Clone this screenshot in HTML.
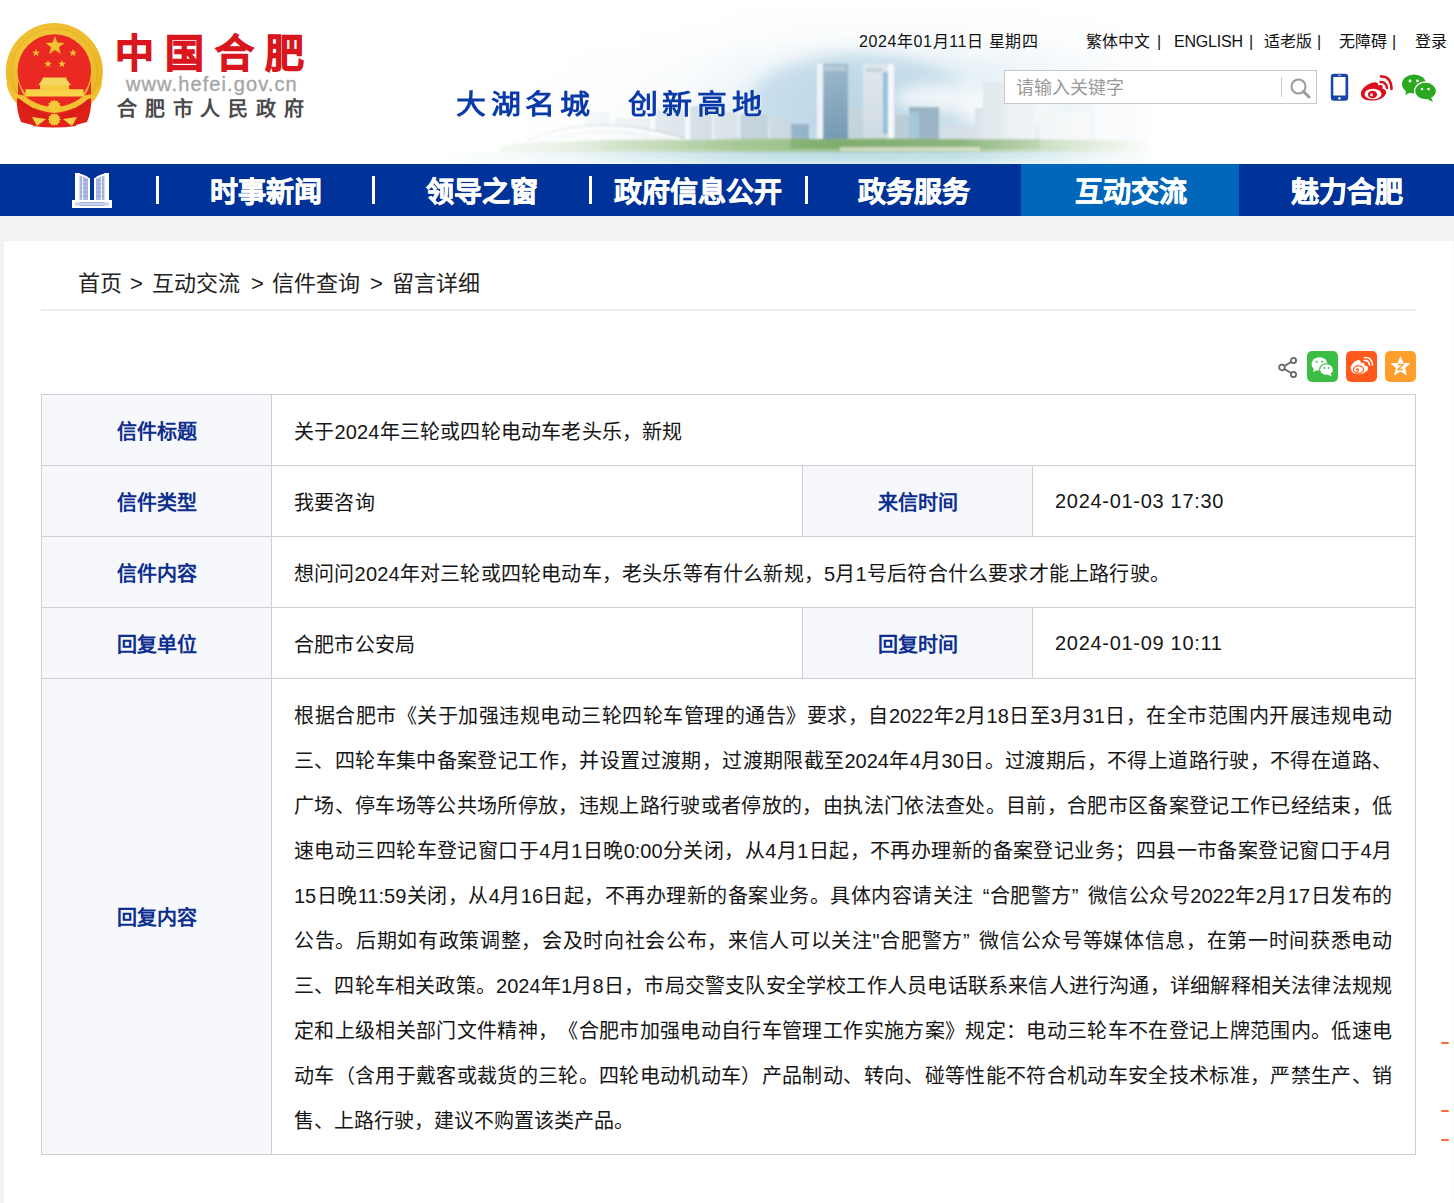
<!DOCTYPE html>
<html lang="zh-CN"><head><meta charset="utf-8">
<style>
*{margin:0;padding:0;box-sizing:border-box}
html,body{text-spacing-trim:space-all;width:1454px;height:1203px;overflow:hidden;background:#fff;font-family:"Liberation Sans",sans-serif;color:#333}
.abs{position:absolute}
#header{position:absolute;left:0;top:0;width:1454px;height:164px;background:#fff;overflow:hidden}
#nav{position:absolute;left:0;top:164px;width:1454px;height:52px;background:#003399}
#gray{position:absolute;left:0;top:216px;width:1454px;height:987px;background:#f2f2f2}
#content{position:absolute;left:4px;top:241px;width:1450px;height:962px;background:#fff}
.nv{position:absolute;top:167px;height:52px;line-height:52px;color:#fff;font-weight:bold;font-size:28px;-webkit-text-stroke:0.6px #fff;text-align:center;white-space:nowrap}
.sep{position:absolute;top:176px;width:3px;height:28px;background:#fff}
table{position:absolute;left:41px;top:394px;width:1375px;border-collapse:collapse}
td{border:1px solid #cfcfcf;font-size:20px;color:#161616}
td.l{background:#f7f8fc;color:#0c2e8e;font-weight:bold;text-align:center;width:230px}
td.v{padding-left:22px;letter-spacing:0.2px}
.ln{white-space:nowrap;text-align:justify;text-align-last:justify;height:45px;overflow:visible}
.lk{top:31px;font-size:16px;color:#111;white-space:nowrap;line-height:22px}
.bc{top:269px;font-size:22px;color:#222;white-space:nowrap;line-height:30px}
</style></head>
<body>
<div id="header">
<svg class="abs" style="left:0;top:0" width="1454" height="164" viewBox="0 0 1454 164">
<defs>
<linearGradient id="sky" x1="0" y1="0" x2="0" y2="1">
<stop offset="0" stop-color="#ffffff"/><stop offset="0.22" stop-color="#fafcfd"/><stop offset="0.4" stop-color="#e6f0f6"/><stop offset="0.6" stop-color="#d3e5ef"/><stop offset="0.85" stop-color="#cbe0eb"/><stop offset="1" stop-color="#d3e8ec"/>
</linearGradient>
<linearGradient id="fadeH" x1="0" y1="0" x2="1" y2="0">
<stop offset="0" stop-color="#fff" stop-opacity="0"/><stop offset="0.18" stop-color="#fff" stop-opacity="0.25"/><stop offset="0.42" stop-color="#fff" stop-opacity="0.85"/><stop offset="0.55" stop-color="#fff" stop-opacity="1"/><stop offset="0.72" stop-color="#fff" stop-opacity="0.9"/><stop offset="0.88" stop-color="#fff" stop-opacity="0.35"/><stop offset="1" stop-color="#fff" stop-opacity="0"/>
</linearGradient>
<linearGradient id="fadeV" x1="0" y1="0" x2="0" y2="1">
<stop offset="0" stop-color="#fff" stop-opacity="0"/><stop offset="0.3" stop-color="#fff" stop-opacity="0.6"/><stop offset="0.5" stop-color="#fff" stop-opacity="1"/><stop offset="1" stop-color="#fff" stop-opacity="1"/>
</linearGradient>
<mask id="bm"><rect x="440" y="0" width="720" height="164" fill="url(#fadeH)"/></mask>
<linearGradient id="whiteL" x1="0" y1="0" x2="1" y2="0"><stop offset="0" stop-color="#fff" stop-opacity="1"/><stop offset="0.6" stop-color="#fff" stop-opacity="0.75"/><stop offset="1" stop-color="#fff" stop-opacity="0"/></linearGradient>
<filter id="cloud" x="600" y="0" width="600" height="200" filterUnits="userSpaceOnUse"><feGaussianBlur stdDeviation="7"/></filter>
<filter id="soft" x="400" y="-20" width="800" height="200" filterUnits="userSpaceOnUse"><feGaussianBlur stdDeviation="0.8"/></filter>
<linearGradient id="water" x1="0" y1="0" x2="0" y2="1"><stop offset="0" stop-color="#b5d9e1"/><stop offset="1" stop-color="#cde7ec"/></linearGradient>
<linearGradient id="glass" x1="0" y1="0" x2="0" y2="1"><stop offset="0" stop-color="#9cb9cb"/><stop offset="1" stop-color="#7499b2"/></linearGradient>
<linearGradient id="glass2" x1="0" y1="0" x2="0" y2="1"><stop offset="0" stop-color="#dfe7ec"/><stop offset="1" stop-color="#cfdae2"/></linearGradient>
</defs>
<g mask="url(#bm)" filter="url(#soft)">
<rect x="440" y="0" width="720" height="164" fill="url(#sky)"/>
<rect x="440" y="0" width="400" height="164" fill="url(#whiteL)"/>
<g filter="url(#cloud)"><ellipse cx="860" cy="100" rx="110" ry="45" fill="#b4d1e4" opacity="0.7"/><ellipse cx="950" cy="98" rx="55" ry="14" fill="#f4f8fa" opacity="0.9"/><ellipse cx="1010" cy="112" rx="50" ry="13" fill="#f4f8fa" opacity="0.9"/></g>
<!-- distant buildings -->
<rect x="585" y="112" width="25" height="30" fill="#dfe7ec"/>
<rect x="615" y="118" width="35" height="25" fill="#d8e1e7"/>
<rect x="655" y="110" width="30" height="33" fill="#cbd8e0"/>
<rect x="690" y="106" width="22" height="37" fill="#c3d2dc"/>
<rect x="714" y="112" width="24" height="31" fill="#d2dde4"/>
<rect x="740" y="114" width="28" height="29" fill="#bccdd8"/>
<rect x="770" y="118" width="20" height="25" fill="#c9d6de"/>
<rect x="791" y="124" width="18" height="18" fill="#8fb0c4"/>
<!-- stadium -->
<path d="M522 145 Q588 108 690 141 L690 146 L522 146Z" fill="#f7f9fa"/>
<path d="M527 141 Q592 111 684 138" stroke="#a9bac6" stroke-width="1.8" fill="none"/>
<path d="M537 143 Q596 120 676 141" stroke="#c9d4db" stroke-width="1.2" fill="none"/>
<path d="M560 139 Q600 126 650 138" stroke="#d3dde3" stroke-width="1" fill="none"/>
<!-- towers -->
<rect x="817" y="64" width="31" height="76" fill="url(#glass)"/>
<rect x="817" y="64" width="6" height="76" fill="#eef3f6"/>
<rect x="824" y="66" width="22" height="5" fill="#b6cbd8"/>
<rect x="849" y="108" width="13" height="33" fill="#c3d3dc"/>
<rect x="863" y="64" width="31" height="76" fill="url(#glass2)"/>
<rect x="866" y="68" width="16" height="4" fill="#c5d3dc"/>
<rect x="883" y="72" width="5" height="62" fill="#8fbedb"/>
<rect x="888" y="64" width="6" height="76" fill="#f6f8f9"/>
<rect x="895" y="115" width="14" height="27" fill="#b9cad5"/>
<rect x="909" y="107" width="30" height="35" fill="#93aec0"/>
<rect x="909" y="112" width="10" height="30" fill="#a2c2d6"/>
<rect x="940" y="126" width="35" height="16" fill="#d0dce3"/>
<rect x="975" y="108" width="8" height="34" fill="#d3dee5"/>
<rect x="983" y="82" width="22" height="60" fill="#d9e3e9"/>
<rect x="1005" y="100" width="30" height="42" fill="#e2e9ed"/>
<rect x="1040" y="112" width="50" height="30" fill="#e6ecef"/>
<rect x="1095" y="92" width="30" height="50" fill="#e9eef1"/>
<!-- trees / shore / water -->
<path d="M500 147 Q520 141 560 142 Q620 138 700 140 Q760 137 820 139 Q900 137 980 140 Q1050 138 1150 141 L1150 152 L500 152Z" fill="#a1c48f"/>
<rect x="790" y="139" width="250" height="10" fill="#76a563" opacity="0.75"/>
<rect x="600" y="141" width="190" height="8" fill="#8cb97a" opacity="0.6"/>
<rect x="1040" y="140" width="100" height="9" fill="#8cb97a" opacity="0.5"/>
<rect x="840" y="147" width="140" height="4" fill="#e8e6d8" opacity="0.7"/>
<rect x="440" y="152" width="720" height="12" fill="url(#water)"/>
</g>
<!-- emblem -->
<defs><clipPath id="upper"><rect x="0" y="0" width="110" height="99"/></clipPath>
<radialGradient id="goldg" cx="0.45" cy="0.4" r="0.6"><stop offset="0" stop-color="#f8d24a"/><stop offset="1" stop-color="#eab423"/></radialGradient></defs>
<g>
<circle cx="54.3" cy="71.5" r="48.5" fill="url(#goldg)" clip-path="url(#upper)"/>
<path d="M6 82 Q10 104 30 112 L54 118 L78 112 Q98 104 102.5 82 L90 98 L19 98Z" fill="#f0c232"/>
<circle cx="54.3" cy="71.5" r="43" fill="none" stroke="#e0a91e" stroke-width="1.2" opacity="0.5" clip-path="url(#upper)"/>
<circle cx="54.3" cy="71" r="36.8" fill="#ea2a22"/>
<path d="M18 80 Q22 98 32 102 L54 108 L76 102 Q87 98 91 80 L91 96 L18 96Z" fill="#ea2a22"/>
<polygon points="55,36 57.4,42.6 64.4,42.9 58.9,47.2 60.8,54 55,50 49.2,54 51.1,47.2 45.6,42.9 52.6,42.6" fill="#f2c232"/>
<polygon points="36,49 37,51.7 39.8,51.8 37.6,53.5 38.4,56.2 36,54.6 33.6,56.2 34.4,53.5 32.2,51.8 35,51.7" fill="#f2c232"/>
<polygon points="73,49 74,51.7 76.8,51.8 74.6,53.5 75.4,56.2 73,54.6 70.6,56.2 71.4,53.5 69.2,51.8 72,51.7" fill="#f2c232"/>
<polygon points="48,60 49,62.7 51.8,62.8 49.6,64.5 50.4,67.2 48,65.6 45.6,67.2 46.4,64.5 44.2,62.8 47,62.7" fill="#f2c232"/>
<polygon points="62,60 63,62.7 65.8,62.8 63.6,64.5 64.4,67.2 62,65.6 59.6,67.2 60.4,64.5 58.2,62.8 61,62.7" fill="#f2c232"/>
<path d="M43 77.5 L66 77.5 L67 80 L71 85 L38.5 85 L42 80Z" fill="#f7d65e"/>
<rect x="40" y="85" width="29" height="4.5" fill="#f5cd40"/>
<rect x="25.5" y="89.2" width="58" height="7.5" fill="#f9d448"/>
<path d="M17 98 Q24 100 35 110 L36 126 L21 122 Q16 110 17 98Z" fill="#dc2119"/>
<path d="M91 98 Q84 100 73 110 L72 126 L87 122 Q92 110 91 98Z" fill="#dc2119"/>
<path d="M30 108 L79 108 L76 126 Q54 129 33 126Z" fill="#e2241b"/>
<path d="M26 96.7 L83 96.7 Q70 106 54.3 107 Q38 106 26 96.7Z" fill="#ea2a22"/>
<path d="M18 99 Q36 114 54.3 116 Q72 114 90 99 L90 104 Q72 120 54.3 120 Q36 120 18 104Z" fill="#d81e17"/>
<path d="M15 94 Q30 111 54.3 113 Q78 111 93 94 L84 95.5 Q72 106 54.3 107.5 Q36 106 24 95.5Z" fill="#f2c232"/>
<polygon points="54.30,99.70 55.70,101.28 57.70,100.61 58.12,102.68 60.19,103.10 59.52,105.10 61.10,106.50 59.52,107.90 60.19,109.90 58.12,110.32 57.70,112.39 55.70,111.72 54.30,113.30 52.90,111.72 50.90,112.39 50.48,110.32 48.41,109.90 49.08,107.90 47.50,106.50 49.08,105.10 48.41,103.10 50.48,102.68 50.90,100.61 52.90,101.28" fill="#f4c838"/>
<path d="M32 117 L46 119 L37 126Z" fill="#f5d24a"/>
<path d="M77 117 L63 119 L72 126Z" fill="#f5d24a"/>
<polygon points="54.30,113.00 55.65,114.48 57.55,113.87 57.98,115.82 59.93,116.25 59.32,118.15 60.80,119.50 59.32,120.85 59.93,122.75 57.98,123.18 57.55,125.13 55.65,124.52 54.30,126.00 52.95,124.52 51.05,125.13 50.62,123.18 48.67,122.75 49.28,120.85 47.80,119.50 49.28,118.15 48.67,116.25 50.62,115.82 51.05,113.87 52.95,114.48" fill="#f4c838"/>
</g>
</svg>
<div class="abs" style="left:115px;top:29px;font-size:39px;font-weight:700;color:#d9161e;-webkit-text-stroke:1.1px #d9161e;letter-spacing:11px;white-space:nowrap;line-height:50px">中国合肥</div>
<div class="abs" style="left:126px;top:73px;font-size:20px;color:#a6a6a6;-webkit-text-stroke:0.35px #a6a6a6;letter-spacing:1.1px;white-space:nowrap;line-height:22px">www.hefei.gov.cn</div>
<div class="abs" style="left:117px;top:96px;font-size:20px;font-weight:bold;color:#4a4a4a;letter-spacing:7.8px;white-space:nowrap;line-height:26px">合肥市人民政府</div>
<div class="abs" style="left:456px;top:84px;font-size:30px;font-weight:700;color:#0a3aa8;letter-spacing:4.67px;white-space:nowrap;line-height:40px;transform:scaleY(0.92);transform-origin:0 33px;text-shadow:0 0 2px #fff">大湖名城<span style="margin-left:33px">创新高地</span></div>
<div class="abs" style="left:859px;top:31px;font-size:16px;color:#111;letter-spacing:0.6px;white-space:nowrap;line-height:22px">2024年01月11日 星期四</div>
<div class="abs lk" style="left:1086px">繁体中文</div>
<div class="abs lk" style="left:1157px">|</div>
<div class="abs lk" style="left:1174px;letter-spacing:-0.2px">ENGLISH</div>
<div class="abs lk" style="left:1249px">|</div>
<div class="abs lk" style="left:1264px">适老版</div>
<div class="abs lk" style="left:1317px">|</div>
<div class="abs lk" style="left:1339px">无障碍</div>
<div class="abs lk" style="left:1392px">|</div>
<div class="abs lk" style="left:1415px">登录</div>
<div class="abs" style="left:1004px;top:70px;width:313px;height:34px;border:1px solid #c8c8c8;background:#fff"></div>
<div class="abs" style="left:1016px;top:76px;font-size:18px;color:#9a9a9a;white-space:nowrap;line-height:24px">请输入关键字</div>
<div class="abs" style="left:1281px;top:77px;width:1px;height:20px;background:#d0d0d0"></div>
<svg class="abs" style="left:1288px;top:76px" width="24" height="24" viewBox="0 0 24 24"><circle cx="10.5" cy="10.5" r="7" fill="none" stroke="#9a9a9a" stroke-width="2"/><path d="M15.5 15.5 L21 21" stroke="#9a9a9a" stroke-width="3" stroke-linecap="round"/></svg>
<svg class="abs" style="left:1330px;top:73px" width="19" height="29" viewBox="0 0 19 29"><rect x="0.8" y="0.8" width="17.4" height="27" rx="3" fill="#1a46a8"/><rect x="3.3" y="4" width="12.2" height="18.5" fill="#fff"/><circle cx="9.4" cy="25.2" r="1.2" fill="#fff"/><rect x="8" y="1.8" width="3" height="0.9" fill="#fff" opacity="0.8"/></svg>
<svg class="abs" style="left:1359px;top:74px" width="34" height="28" viewBox="0 0 34 28"><path d="M12 9 C5 12 1 17 2 21 C3 26 10 27 15.5 26.5 C23 25.5 28 21 27 17.5 C26.5 15.5 25 15 23.5 14.8 C24.5 12 23 10 19 11.5 C19.5 8.5 17 7.5 12 9Z" fill="#d8121c"/><ellipse cx="14" cy="20" rx="8.5" ry="5.3" fill="#fff"/><ellipse cx="13.5" cy="20.5" rx="4.6" ry="3.8" fill="#d8121c"/><circle cx="12.5" cy="21" r="1.4" fill="#fff"/><path d="M21.5 8 Q27 7.5 28 14" stroke="#d8121c" stroke-width="2.4" fill="none" stroke-linecap="round"/><path d="M22 2.5 Q32 2 32.5 15" stroke="#d8121c" stroke-width="2.6" fill="none" stroke-linecap="round"/></svg>
<svg class="abs" style="left:1402px;top:74px" width="35" height="28" viewBox="0 0 35 28"><ellipse cx="12" cy="10" rx="12" ry="9.5" fill="#2aa81f"/><path d="M4 16 L3.5 21 L9 18Z" fill="#2aa81f"/><ellipse cx="23.5" cy="17" rx="11" ry="9" fill="#2aa81f" stroke="#fff" stroke-width="1.3"/><path d="M29 23.5 L31 28 L25 25Z" fill="#2aa81f"/><circle cx="8" cy="7" r="1.4" fill="#fff"/><circle cx="15.5" cy="7" r="1.4" fill="#fff"/><circle cx="20" cy="15" r="1.3" fill="#fff"/><circle cx="26.5" cy="15" r="1.3" fill="#fff"/></svg>
</div>
<div id="nav"></div>
<div class="abs" style="left:1021px;top:164px;width:218px;height:52px;background:#0067bb"></div>
<div class="sep" style="left:156px"></div>
<div class="sep" style="left:372px"></div>
<div class="sep" style="left:589px"></div>
<div class="sep" style="left:805px"></div>
<div class="nv" style="left:210px">时事新闻</div>
<div class="nv" style="left:426px">领导之窗</div>
<div class="nv" style="left:614px">政府信息公开</div>
<div class="nv" style="left:858px">政务服务</div>
<div class="nv" style="left:1075px">互动交流</div>
<div class="nv" style="left:1291px">魅力合肥</div>
<div id="gray"></div>
<div id="content"></div>
<div class="abs" style="left:1453px;top:241px;width:1px;height:962px;background:#f8f8f8"></div>
<svg class="abs" style="left:70px;top:170px" width="44" height="40" viewBox="0 0 44 40">
<path d="M5 3 Q14 3.5 19.5 8.5 L19.5 31 L5 31Z" fill="#aebbe0"/>
<path d="M39 3 Q30 3.5 24.5 8.5 L24.5 31 L39 31Z" fill="#aebbe0"/>
<g stroke="#8fa0d2" stroke-width="0.8">
<path d="M10 10 H19 M10 14 H19 M10 18 H19 M10 22 H19 M10 26 H19 M25 10 H34 M25 14 H34 M25 18 H34 M25 22 H34 M25 26 H34"/>
</g>
<g fill="#fff">
<rect x="5" y="3" width="4.5" height="34"/>
<rect x="34.5" y="3" width="4.5" height="34"/>
<path d="M5 3 Q14 3.5 19.5 8.5 L19.5 10 Q14 5.5 5 5Z"/>
<path d="M39 3 Q30 3.5 24.5 8.5 L24.5 10 Q30 5.5 39 5Z"/>
<rect x="18" y="8" width="2" height="23"/>
<rect x="24" y="8" width="2" height="23"/>
<rect x="12" y="5" width="1.2" height="26" opacity="0.7"/>
<rect x="30.8" y="5" width="1.2" height="26" opacity="0.7"/>
<rect x="2" y="30" width="40" height="2.5"/>
<rect x="2" y="32" width="3" height="6"/><rect x="39" y="32" width="3" height="6"/>
<rect x="2" y="35.5" width="40" height="2.5"/>
</g>
<rect x="5" y="32.5" width="34" height="3" fill="#c9d2ec"/>
</svg>
<svg class="abs" style="left:1278px;top:357px" width="20" height="21" viewBox="0 0 20 21"><g fill="none" stroke="#666" stroke-width="1.8"><circle cx="4" cy="10.5" r="2.8"/><circle cx="15.5" cy="3.5" r="2.6"/><circle cx="15.5" cy="17.5" r="2.6"/><path d="M6.5 9 L13 5 M6.5 12 L13 16"/></g></svg>
<div class="abs" style="left:1307px;top:351px;width:31px;height:31px;border-radius:5px;background:#3cbd46"></div>
<svg class="abs" style="left:1307px;top:351px" width="31" height="31" viewBox="0 0 31 31"><ellipse cx="12.5" cy="13" rx="8" ry="6.8" fill="#fff"/><path d="M7 17 L6 21 L10.5 19Z" fill="#fff"/><ellipse cx="19.5" cy="18.5" rx="7.5" ry="6.3" fill="#3cbd46"/><ellipse cx="19.5" cy="18.5" rx="6.3" ry="5.3" fill="#fff"/><path d="M23 22 L25 25.5 L20.5 23.5Z" fill="#fff"/><circle cx="9.8" cy="10.8" r="1" fill="#3cbd46"/><circle cx="15" cy="10.8" r="1" fill="#3cbd46"/><circle cx="17.5" cy="17" r="0.9" fill="#3cbd46"/><circle cx="21.5" cy="17" r="0.9" fill="#3cbd46"/></svg>
<div class="abs" style="left:1346px;top:351px;width:31px;height:31px;border-radius:5px;background:#ff5a1b"></div>
<svg class="abs" style="left:1346px;top:351px" width="31" height="31" viewBox="0 0 31 31"><path d="M12 9 C7 11 4 15 5 18.5 C6 23 12 24 16.5 22.5 C22 20.5 23 17.5 21.5 15.5 C20.5 14.5 19 14.5 18.5 14.5 C19 12 17 11 14.5 12.5 C15.5 10 14 9 12 9Z" fill="#fff"/><ellipse cx="12.5" cy="18.5" rx="5" ry="3.6" fill="none" stroke="#ff5a1b" stroke-width="1.3"/><circle cx="11.5" cy="19" r="1.7" fill="#ff5a1b"/><circle cx="11.2" cy="19.2" r="0.6" fill="#fff"/><path d="M18 9.5 Q23 9 23.5 14" stroke="#fff" stroke-width="1.6" fill="none" stroke-linecap="round"/><path d="M18.5 6.5 Q26 6 26.5 14" stroke="#fff" stroke-width="1.6" fill="none" stroke-linecap="round"/></svg>
<div class="abs" style="left:1385px;top:351px;width:31px;height:31px;border-radius:5px;background:#ff9e2d"></div>
<svg class="abs" style="left:1385px;top:351px" width="31" height="31" viewBox="0 0 31 31"><polygon points="15.5,5 18.5,12 25.5,12.3 20,17 22,24.5 15.5,20.5 9,24.5 11,17 5.5,12.3 12.5,12" fill="#fff"/><path d="M13 13.5 L18 13.5 L13 18.5 L18 18.5" stroke="#ff9e2d" stroke-width="1.4" fill="none"/></svg>
<div class="abs" style="left:1441px;top:1042px;width:8px;height:2px;background:#f86b3b;border-radius:1px"></div>
<div class="abs" style="left:1441px;top:1110px;width:8px;height:2px;background:#f86b3b;border-radius:1px"></div>
<div class="abs" style="left:1441px;top:1139px;width:8px;height:2px;background:#f86b3b;border-radius:1px"></div>

<div class="abs bc" style="left:78px">首页</div>
<div class="abs bc" style="left:130px">&gt;</div>
<div class="abs bc" style="left:152px">互动交流</div>
<div class="abs bc" style="left:251px">&gt;</div>
<div class="abs bc" style="left:272px">信件查询</div>
<div class="abs bc" style="left:370px">&gt;</div>
<div class="abs bc" style="left:392px">留言详细</div>
<div class="abs" style="left:41px;top:309px;width:1375px;height:2px;background:#eee"></div>

<table>
<tr style="height:71px"><td class="l">信件标题</td><td class="v" colspan="3">关于2024年三轮或四轮电动车老头乐，新规</td></tr>
<tr style="height:71px"><td class="l">信件类型</td><td class="v" style="width:531px">我要咨询</td><td class="l">来信时间</td><td class="v" style="letter-spacing:0.7px">2024-01-03 17:30</td></tr>
<tr style="height:71px"><td class="l">信件内容</td><td class="v" colspan="3">想问问2024年对三轮或四轮电动车，老头乐等有什么新规，5月1号后符合什么要求才能上路行驶。</td></tr>
<tr style="height:71px"><td class="l">回复单位</td><td class="v">合肥市公安局</td><td class="l">回复时间</td><td class="v" style="letter-spacing:0.7px">2024-01-09 10:11</td></tr>
<tr style="height:476px"><td class="l">回复内容</td><td class="v" colspan="3"></td></tr>
</table>
<div class="abs" id="reply" style="left:294px;top:694px;width:1098px;font-size:20px;line-height:45px;color:#161616">
<div class="ln">根据合肥市《关于加强违规电动三轮四轮车管理的通告》要求，自2022年2月18日至3月31日，在全市范围内开展违规电动</div>
<div class="ln">三、四轮车集中备案登记工作，并设置过渡期，过渡期限截至2024年4月30日。过渡期后，不得上道路行驶，不得在道路、</div>
<div class="ln">广场、停车场等公共场所停放，违规上路行驶或者停放的，由执法门依法查处。目前，合肥市区备案登记工作已经结束，低</div>
<div class="ln">速电动三四轮车登记窗口于4月1日晚0:00分关闭，从4月1日起，不再办理新的备案登记业务；四县一市备案登记窗口于4月</div>
<div class="ln">15日晚11:59关闭，从4月16日起，不再办理新的备案业务。具体内容请关注<span style="margin-left:9px">“</span>合肥警方<span style="margin-right:9px">”</span>微信公众号2022年2月17日发布的</div>
<div class="ln">公告。后期如有政策调整，会及时向社会公布，来信人可以关注"合肥警方<span style="margin-right:9px">”</span>微信公众号等媒体信息，在第一时间获悉电动</div>
<div class="ln">三、四轮车相关政策。2024年1月8日，市局交警支队安全学校工作人员电话联系来信人进行沟通，详细解释相关法律法规规</div>
<div class="ln">定和上级相关部门文件精神，《合肥市加强电动自行车管理工作实施方案》规定：电动三轮车不在登记上牌范围内。低速电</div>
<div class="ln">动车（含用于戴客或裁货的三轮。四轮电动机动车）产品制动、转向、碰等性能不符合机动车安全技术标准，严禁生产、销</div>
<div class="ln" style="text-align-last:left">售、上路行驶，建议不购置该类产品。</div>
</div>
</body></html>
